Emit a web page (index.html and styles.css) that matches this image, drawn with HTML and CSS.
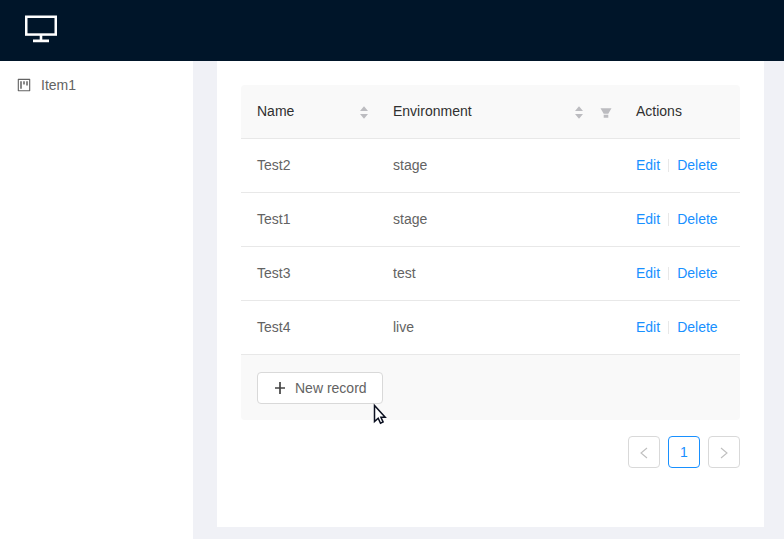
FILE: index.html
```
<!DOCTYPE html>
<html lang="en">
<head>
<meta charset="utf-8">
<title>Records</title>
<link rel="stylesheet" href="styles.css">
</head>
<body>
<header class="header">
  <svg class="logo" width="32" height="28" viewBox="0 0 32 28"><rect x="1.25" y="1.75" width="29.5" height="17.8" fill="none" stroke="#fff" stroke-width="2.5"/><path fill="#fff" d="M14.7 20h2.6v4.6h6.7v2.6H8v-2.6h6.7z"/></svg>
</header>
<div class="layout">
  <nav class="sidebar">
    <a class="menu-item">
      <svg width="16" height="16" viewBox="0 0 1024 1024" fill="currentColor"><path d="M280 752h80c4.400 0 8-3.600 8-8V280c0-4.400-3.600-8-8-8h-80c-4.400 0-8 3.600-8 8v464c0 4.400 3.600 8 8 8zm192-280h80c4.400 0 8-3.600 8-8V280c0-4.400-3.600-8-8-8h-80c-4.400 0-8 3.600-8 8v184c0 4.400 3.600 8 8 8zm192 72h80c4.400 0 8-3.600 8-8V280c0-4.400-3.600-8-8-8h-80c-4.400 0-8 3.600-8 8v256c0 4.400 3.600 8 8 8zm216-432H144c-17.700 0-32 14.300-32 32v736c0 17.700 14.300 32 32 32h736c17.700 0 32-14.300 32-32V144c0-17.700-14.300-32-32-32zm-40 728H184V184h656v656z"/></svg>
      <span>Item1</span>
    </a>
  </nav>
  <main class="content">
    <div class="table">
      <div class="row head">
        <div class="cell">Name
          <svg class="sorter" width="8" height="14" viewBox="0 0 8 14"><path d="M4 .3 8 5H0zM0 8h8L4 12.700z"/></svg>
        </div>
        <div class="cell">Environment
          <svg class="sorter" width="8" height="14" viewBox="0 0 8 14"><path d="M4 .3 8 5H0zM0 8h8L4 12.700z"/></svg>
          <svg class="filter" width="12" height="12" viewBox="0 0 12 12"><path d="M.5 1.300h11L8.300 6.700H3.700zM3.700 7.800h4.600v2.900H3.700z"/></svg>
        </div>
        <div class="cell">Actions</div>
      </div>
      <div class="row"><div class="cell">Test2</div><div class="cell">stage</div><div class="cell"><a>Edit</a><i class="divider"></i><a>Delete</a></div></div>
      <div class="row"><div class="cell">Test1</div><div class="cell">stage</div><div class="cell"><a>Edit</a><i class="divider"></i><a>Delete</a></div></div>
      <div class="row"><div class="cell">Test3</div><div class="cell">test</div><div class="cell"><a>Edit</a><i class="divider"></i><a>Delete</a></div></div>
      <div class="row"><div class="cell">Test4</div><div class="cell">live</div><div class="cell"><a>Edit</a><i class="divider"></i><a>Delete</a></div></div>
      <div class="footer">
        <button class="button"><svg width="12" height="12" viewBox="0 0 12 12"><path d="M6 0v12M1 6h10" stroke="#444" stroke-width="1.700"/></svg><span>New record</span></button>
      </div>
    </div>
    <div class="pagination">
      <span class="page"><svg width="12" height="12" viewBox="0 0 12 12"><path d="M9 2 3 7l6 5"/></svg></span>
      <span class="page active">1</span>
      <span class="page"><svg width="12" height="12" viewBox="0 0 12 12"><path d="m3 2 6 5-6 5"/></svg></span>
    </div>
  </main>
</div>
<svg class="cursor" width="14" height="22" viewBox="0 0 14 22"><path d="M1.500 1.500v16l3.700-3.300 2.300 5 2.600-1.200-2.200-4.700h4.300z" fill="#fff" stroke="#0b1020" stroke-width="1.500"/></svg>
</body>
</html>
```
FILE: styles.css
```
* { box-sizing: border-box; }
body {
  margin: 0;
  height: 539px;
  overflow: hidden;
  display: flex;
  flex-direction: column;
  background: #f0f2f5;
  color: #636363;
  font: 14px/21px "Liberation Sans", Arial, sans-serif;
}
svg { display: block; flex: none; overflow: visible; }
.header { height: 61px; flex: none; padding: 15px 25px; background: #001529; }
.layout { flex: 1; display: flex; background: #f0f1f6; }
.sidebar { width: 193px; background: #fff; padding: 14px 16px; }
.menu-item { display: flex; align-items: center; gap: 9px; height: 20px; }
.content {
  flex: 1;
  margin: 0 20px 12px 24px;
  padding: 24px;
  background: #fff;
}
.table { border-radius: 4px; overflow: hidden; }
.row {
  display: grid;
  grid-template-columns: 136px 243px 120px;
  height: 54px;
  border-bottom: 1px solid #e8e8e8;
}
.head { background: #f9f9f9; color: #303030; }
.cell { display: flex; align-items: center; padding: 0 8px 0 16px; }
.cell a { color: #1890ff; }
.sorter { margin: 2px 1px 0 auto; fill: #bcbcc0; }
.filter { margin: 2px 0 0 16px; fill: #bcbcc0; }
.divider { width: 1px; height: 13px; margin: 0 8px; background: #e8e8e8; }
.footer { height: 65px; padding: 17px 16px; background: #f9f9f9; }
.button {
  display: flex;
  align-items: center;
  gap: 9px;
  width: 126px;
  height: 32px;
  padding: 0 0 0 16px;
  border: 1px solid #d9d9d9;
  border-radius: 4px;
  background: #fff;
  color: #636363;
  font: inherit;
}
.pagination { display: flex; justify-content: flex-end; gap: 8px; margin-top: 16px; }
.page {
  display: flex;
  align-items: center;
  justify-content: center;
  width: 32px;
  height: 32px;
  border: 1px solid #d9d9d9;
  border-radius: 4px;
}
.page path { fill: none; stroke: #bfbfbf; stroke-width: 1.1; }
.page.active { border-color: #1890ff; color: #1890ff; }
.cursor { position: absolute; left: 373px; top: 404px; }
```
